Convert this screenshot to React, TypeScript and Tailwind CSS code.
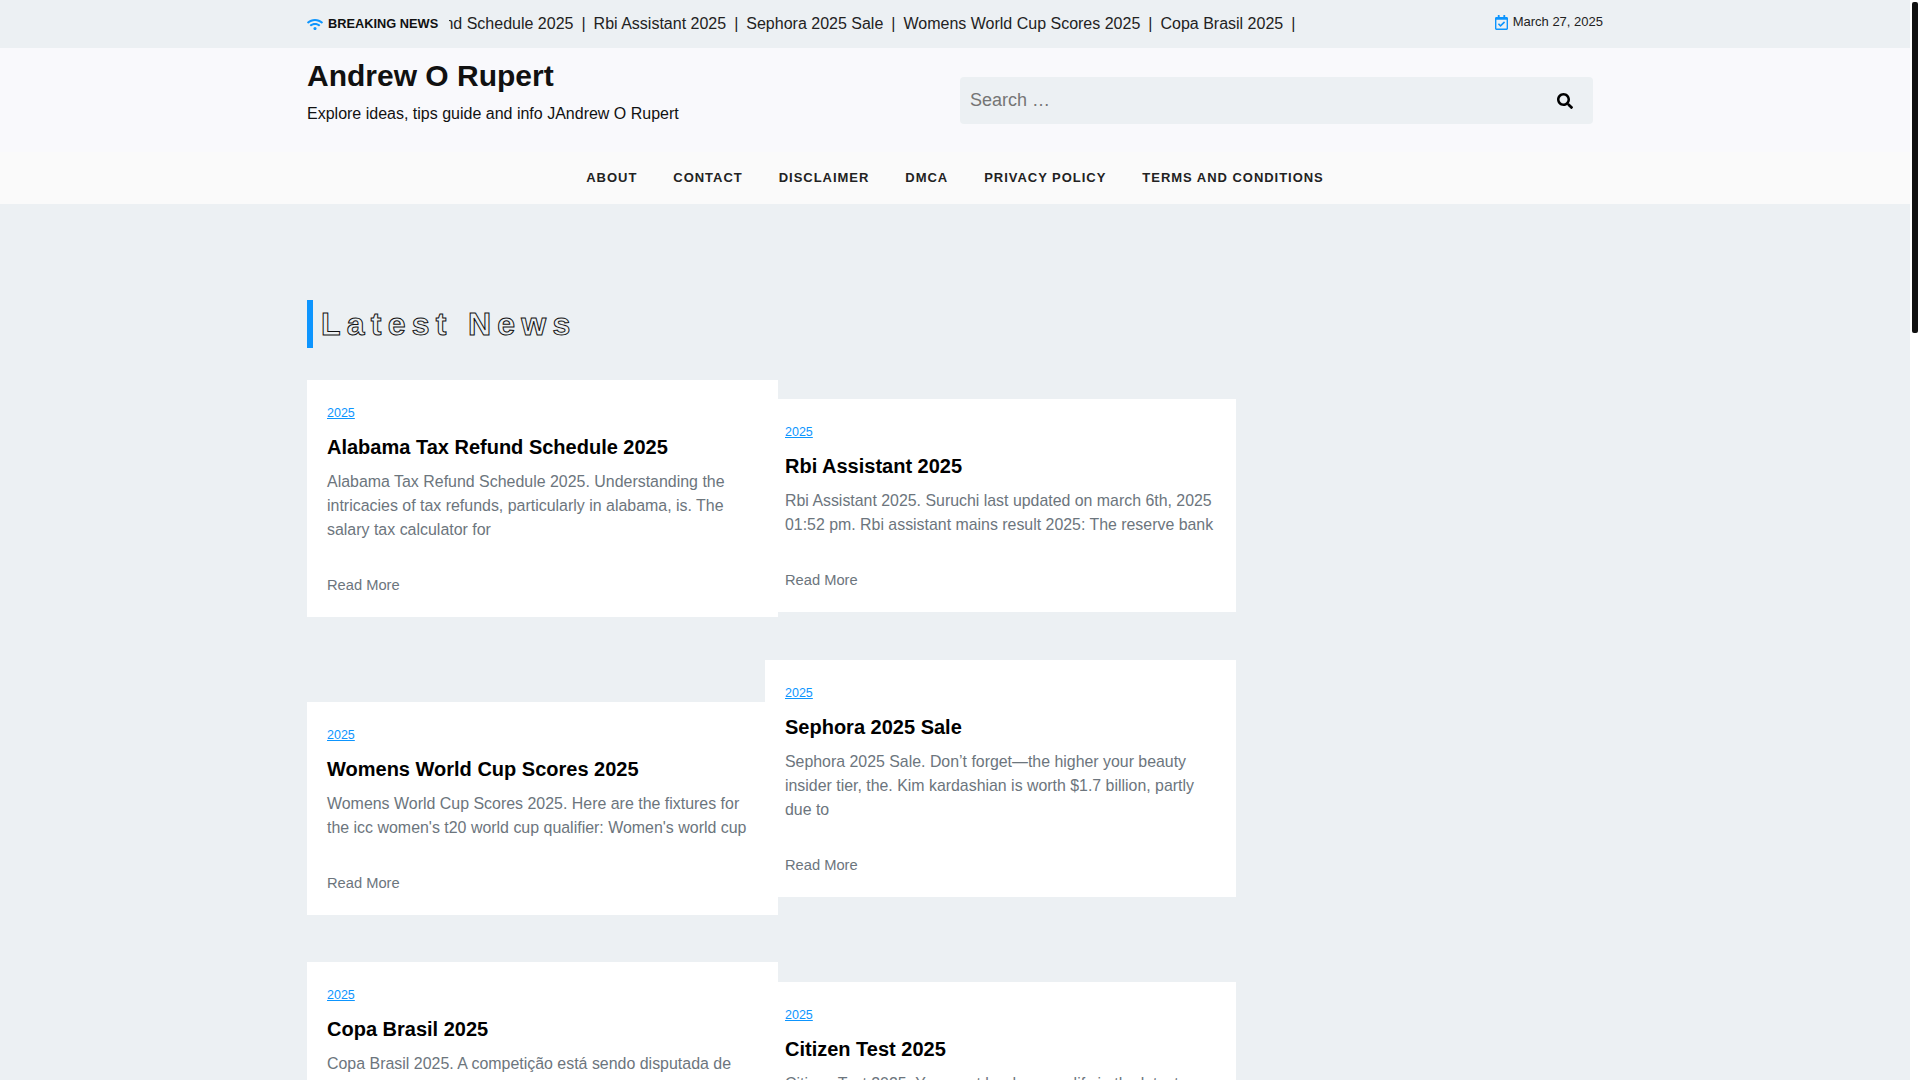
import { FaWifi, FaRegCalendarCheck, FaSearch } from "react-icons/fa";

const navItems = ["About", "Contact", "Disclaimer", "DMCA", "Privacy Policy", "Terms and Conditions"];
const tickerItems = [
  "Alabama Tax Refund Schedule 2025",
  "Rbi Assistant 2025",
  "Sephora 2025 Sale",
  "Womens World Cup Scores 2025",
  "Copa Brasil 2025",
];

type Post = { title: string; text: string; margin: string };

const leftPosts: Post[] = [
  {
    title: "Alabama Tax Refund Schedule 2025",
    text: "Alabama Tax Refund Schedule 2025. Understanding the intricacies of tax refunds, particularly in alabama, is. The salary tax calculator for",
    margin: "mt-0",
  },
  {
    title: "Womens World Cup Scores 2025",
    text: "Womens World Cup Scores 2025. Here are the fixtures for the icc women's t20 world cup qualifier: Women's world cup",
    margin: "mt-[85px]",
  },
  {
    title: "Copa Brasil 2025",
    text: "Copa Brasil 2025. A competição está sendo disputada de",
    margin: "mt-[47px]",
  },
];

const rightPosts: Post[] = [
  {
    title: "Rbi Assistant 2025",
    text: "Rbi Assistant 2025. Suruchi last updated on march 6th, 2025 01:52 pm. Rbi assistant mains result 2025: The reserve bank",
    margin: "mt-0",
  },
  {
    title: "Sephora 2025 Sale",
    text: "Sephora 2025 Sale. Don’t forget—the higher your beauty insider tier, the. Kim kardashian is worth $1.7 billion, partly due to",
    margin: "mt-12",
  },
  {
    title: "Citizen Test 2025",
    text: "Citizen Test 2025. You must be done qualify in the latest",
    margin: "mt-[85px]",
  },
];

function PostCard({ post, textSize }: { post: Post; textSize: string }) {
  return (
    <article className={`${post.margin} bg-white px-5 pt-[23px] pb-5`}>
      <a href="#" className="block text-[12.5px] leading-5 text-[#0d95fe] underline">
        2025
      </a>
      <h3 className="mt-[10px] text-[20px] leading-7 font-bold text-black">{post.title}</h3>
      <p className={`mt-[9px] ${textSize} leading-6 text-[#6c757d]`}>{post.text}</p>
      <a href="#" className="mt-[31px] block text-[14.7px] leading-6 text-[#6c757d]">
        Read More
      </a>
    </article>
  );
}

export default function App() {
  return (
    <div className="flex h-screen overflow-hidden bg-white font-['Liberation_Sans',Arial,sans-serif]">
      <main className="h-full flex-1 overflow-hidden bg-[#ecf0f3]">
        {/* Top bar */}
        <div className="mx-auto flex h-12 w-[1296px] items-center">
          <FaWifi className="h-[13px] w-4 shrink-0 text-[#0d95fe]" />
          <span className="ml-[5px] w-[111px] shrink-0 text-[12.8px] font-bold whitespace-nowrap text-[#111]">BREAKING NEWS</span>
          <div className="ml-[10px] w-[851px] shrink-0 overflow-hidden">
            <div className="-ml-[135px] flex whitespace-nowrap text-[16px] text-[#222]">
              {tickerItems.map((item) => (
                <span key={item} className="shrink-0">
                  {item}
                  <span className="mx-2">|</span>
                </span>
              ))}
            </div>
          </div>
          <div className="mb-1 ml-auto flex items-center">
            <FaRegCalendarCheck className="h-[15px] w-[13px] text-[#0d95fe]" />
            <span className="ml-[5px] text-[13px] text-[#222]">March 27, 2025</span>
          </div>
        </div>

        {/* Header */}
        <header className="bg-[#f9f9fc]">
          <div className="mx-auto flex h-[104px] w-[1296px] items-start justify-between">
            <div>
              <h1 className="mt-[8px] text-[30px] leading-10 font-bold text-[#111]">Andrew O Rupert</h1>
              <p className="mt-[6px] text-[16px] leading-6 text-[#111]">Explore ideas, tips guide and info JAndrew O Rupert</p>
            </div>
            <div className="mt-[29px] mr-[10px] flex h-[47px] w-[633px] items-center justify-between rounded bg-[#ecf0f3] pr-5 pl-[10px]">
              <span className="text-[18px] text-[#757575]">Search …</span>
              <FaSearch className="h-4 w-4 text-black" />
            </div>
          </div>
          <nav className="flex h-[52px] items-center justify-center bg-[#fafafa]">
            {navItems.map((item) => (
              <a key={item} href="#" className="px-[18px] text-[13px] font-bold tracking-[0.97px] text-[#222] uppercase">
                {item}
              </a>
            ))}
          </nav>
        </header>

        {/* Latest news */}
        <section className="mx-auto w-[1296px] pt-[96px]">
          <h2 className="flex h-12 items-center border-l-[6px] border-[#0d95fe] pl-2 text-[32px] font-bold tracking-[6.25px] text-transparent [-webkit-text-stroke:1px_#111]">
            Latest News
          </h2>
          <div className="flex items-start">
            <div className="relative z-10 mt-8 w-[471px] shrink-0">
              {leftPosts.map((post) => (
                <PostCard key={post.title} post={post} textSize="text-[15.95px]" />
              ))}
            </div>
            <div className="mt-[51px] -ml-[13px] w-[471px] shrink-0">
              {rightPosts.map((post) => (
                <PostCard key={post.title} post={post} textSize="text-[15.9px]" />
              ))}
            </div>
          </div>
        </section>
      </main>

      {/* Scrollbar */}
      <aside className="h-full w-[10px] shrink-0 bg-white px-[2px] pt-[2px]">
        <div className="h-[331px] rounded-[2px] bg-[#111]" />
      </aside>
    </div>
  );
}
